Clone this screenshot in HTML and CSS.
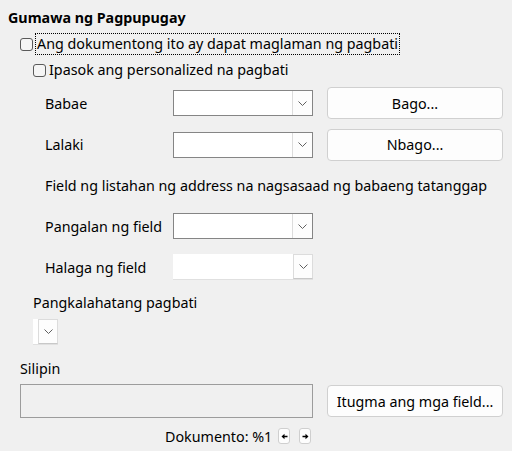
FILE: index.html
```html
<!DOCTYPE html>
<html>
<head>
<meta charset="utf-8">
<link rel="stylesheet" href="styles.css">
</head>
<body>
<div class="page">
  <div class="title">Gumawa ng Pagpupugay</div>
  <div class="check-row lvl1">
    <span class="box"></span>
    <span class="label focus">Ang dokumentong ito ay dapat maglaman ng pagbati</span>
  </div>
  <div class="check-row lvl2">
    <span class="box"></span>
    <span class="label">Ipasok ang personalized na pagbati</span>
  </div>

  <div class="grid">
    <div class="row r-babae">
      <span class="lbl">Babae</span>
      <div class="combo"><div class="field"></div><div class="drop"><svg width="9" height="5" viewBox="0 0 9 5"><path d="M0.5 0.5 L4.5 4.5 L8.5 0.5" fill="none" stroke="#606060" stroke-width="1"/></svg></div></div>
      <button class="btn">Bago...</button>
    </div>
    <div class="row r-lalaki">
      <span class="lbl">Lalaki</span>
      <div class="combo"><div class="field"></div><div class="drop"><svg width="9" height="5" viewBox="0 0 9 5"><path d="M0.5 0.5 L4.5 4.5 L8.5 0.5" fill="none" stroke="#606060" stroke-width="1"/></svg></div></div>
      <button class="btn">Nbago...</button>
    </div>
    <div class="note">Field ng listahan ng address na nagsasaad ng babaeng tatanggap</div>
    <div class="row r-pangalan">
      <span class="lbl">Pangalan ng field</span>
      <div class="combo"><div class="field"></div><div class="drop"><svg width="9" height="5" viewBox="0 0 9 5"><path d="M0.5 0.5 L4.5 4.5 L8.5 0.5" fill="none" stroke="#606060" stroke-width="1"/></svg></div></div>
    </div>
    <div class="row r-halaga">
      <span class="lbl">Halaga ng field</span>
      <div class="combo flat"><div class="field"></div><div class="drop"><svg width="9" height="5" viewBox="0 0 9 5"><path d="M0.5 0.5 L4.5 4.5 L8.5 0.5" fill="none" stroke="#606060" stroke-width="1"/></svg></div></div>
    </div>
  </div>

  <div class="general">
    <div class="glabel">Pangkalahatang pagbati</div>
    <div class="combo flat small"><div class="field"></div><div class="drop"><svg width="9" height="5" viewBox="0 0 9 5"><path d="M0.5 0.5 L4.5 4.5 L8.5 0.5" fill="none" stroke="#606060" stroke-width="1"/></svg></div></div>
  </div>

  <div class="preview-section">
    <div class="plabel">Silipin</div>
    <div class="prow">
      <div class="preview"></div>
      <button class="btn">Itugma ang mga field...</button>
    </div>
    <div class="docrow">
      <span>Dokumento: %1</span>
      <span class="arrow"><svg width="7" height="7" viewBox="0 0 7 7"><path d="M0.5 3.5 L3.5 0.8 L3.5 2.7 L6.5 2.7 L6.5 4.3 L3.5 4.3 L3.5 6.2 Z" fill="#000"/></svg></span>
      <span class="arrow"><svg width="7" height="7" viewBox="0 0 7 7"><path d="M6.5 3.5 L3.5 0.8 L3.5 2.7 L0.5 2.7 L0.5 4.3 L3.5 4.3 L3.5 6.2 Z" fill="#000"/></svg></span>
    </div>
  </div>
</div>
</body>
</html>
```

FILE: styles.css
```css
* { box-sizing: border-box; }
html, body { margin: 0; padding: 0; }
body {
  background: #f0f0f0;
  font-family: "Noto Sans", "Open Sans", sans-serif;
  font-size: 14.3px;
  color: #000;
  width: 512px;
  height: 451px;
  overflow: hidden;
}
.page { padding: 8px 0 0 8px; }
.title {
  font-weight: bold;
  height: 20px;
  line-height: 20px;
}
.check-row {
  display: flex;
  align-items: center;
  height: 20px;
}
.lvl1 { margin-top: 6px; padding-left: 12px; }
.lvl2 { margin-top: 6px; padding-left: 25px; }
.box {
  width: 13px;
  height: 13px;
  border: 1px solid #5a5a5a;
  border-radius: 3px;
  background: #f5f5f5;
  flex: none;
}
.label { line-height: 20px; margin-left: 3px; }
.lvl1 .label { margin-left: 3px; padding: 0 1px; }
.focus { outline: 1px dotted #000; outline-offset: 0; }

.grid { padding-left: 37px; margin-top: 7px; }
.row { display: flex; align-items: center; }
.lbl { width: 128px; flex: none; }
.r-babae { height: 32px; }
.r-lalaki { height: 33px; margin-top: 9px; }
.note { height: 20px; line-height: 20px; margin-top: 15px; }
.r-pangalan { height: 26px; margin-top: 17px; }
.r-halaga { height: 26px; margin-top: 15px; }

.combo {
  width: 140px;
  height: 26px;
  border: 1px solid #858585;
  display: flex;
  background: #fff;
  flex: none;
}
.combo .field { flex: 1; }
.combo .drop {
  width: 20px;
  border-left: 1px solid #dcdcdc;
  background: #fdfdfd;
  display: flex;
  align-items: center;
  justify-content: center;
}
.combo.flat { border: none; border-bottom: 1px solid #e0e0e0; }
.combo.flat .drop { border: 1px solid #dcdcdc; border-bottom-color: #c8c8c8; }
.combo.small { width: 25px; }

.btn {
  font: inherit;
  color: #000;
  width: 176px;
  height: 32px;
  margin-left: 14px;
  background: #fdfdfd;
  border: 1px solid #d0d0d0;
  border-radius: 4px;
  padding: 0;
  flex: none;
}

.general { padding-left: 25px; margin-top: 13px; }
.glabel { height: 20px; line-height: 20px; }
.general .combo { margin-top: 6px; }

.preview-section { padding-left: 12px; margin-top: 14px; }
.plabel { height: 20px; line-height: 20px; }
.prow { display: flex; align-items: center; margin-top: 5px; height: 34px; }
.preview {
  width: 293px;
  height: 34px;
  border: 1px solid #9c9c9c;
}
.docrow {
  display: flex;
  align-items: center;
  height: 16px;
  margin-top: 10px;
  padding-left: 145px;
}
.arrow {
  width: 12px;
  height: 16px;
  border: 1px solid #cfcfcf;
  border-radius: 3px;
  background: #fdfdfd;
  display: flex;
  align-items: center;
  justify-content: center;
  margin-left: 6px;
}
.arrow + .arrow { margin-left: 9px; }
```
